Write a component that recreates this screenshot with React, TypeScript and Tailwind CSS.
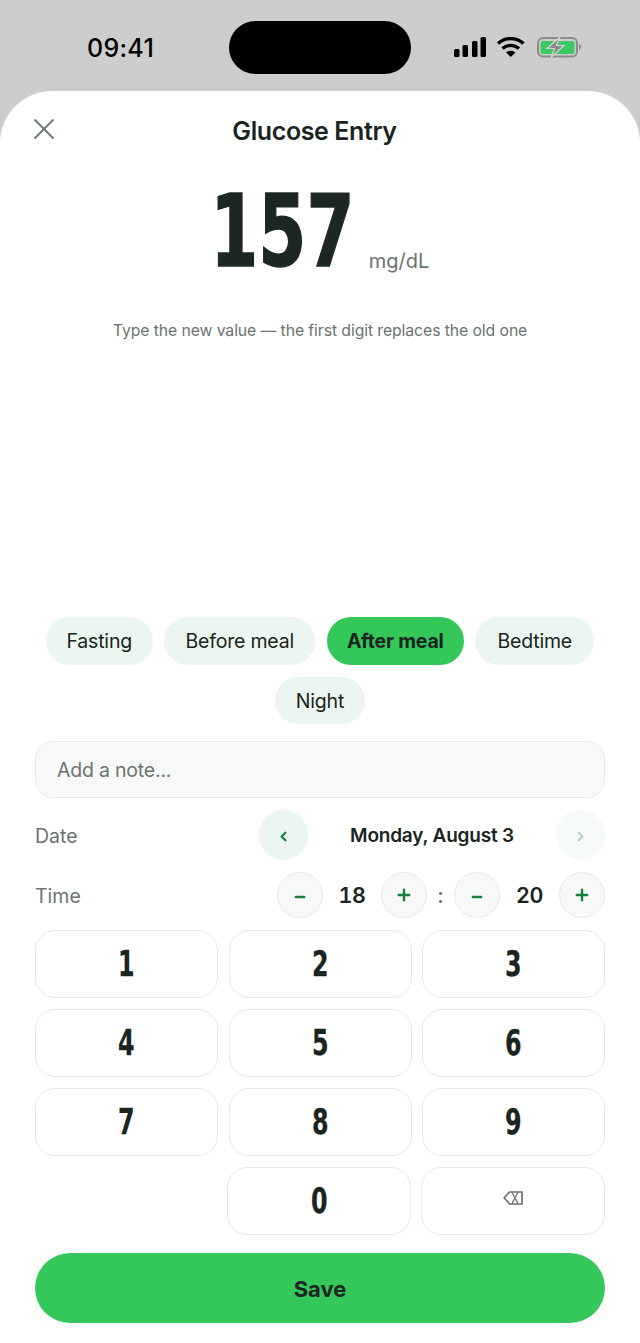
import { X, Plus, Minus, ChevronLeft, ChevronRight } from "lucide-react"

const sans = "font-['Inter','Noto_Sans',sans-serif]"
const narrow = "font-['DejaVu_Sans',sans-serif]"

const chips = [
  { label: "Fasting", width: "w-[107px]" },
  { label: "Before meal", width: "w-[151px]" },
  { label: "After meal", width: "w-[137px]" },
  { label: "Bedtime", width: "w-[119px]" },
  { label: "Night", width: "w-[90px]" },
]

function Chip({ label, width }: { label: string; width: string }) {
  const active = label === "After meal"
  return (
    <div
      className={`flex h-[47.500px] items-center justify-center rounded-full pt-[2px] text-[19.500px] tracking-[-0.2px] text-[#1a2420] ${width} ${
        active ? "bg-[#34c75a] font-bold" : "bg-[#eaf6ef] font-normal"
      }`}
    >
      {label}
    </div>
  )
}

function StepButton({ plus }: { plus?: boolean }) {
  const Icon = plus ? Plus : Minus
  return (
    <div className="flex h-[46px] w-[46px] items-center justify-center rounded-full border border-[#e6e9e7] bg-[#f6f9f7] text-[#15803d]">
      <Icon size={plus ? 18 : 14} strokeWidth={plus ? 3.2 : 4.5} className={plus ? "" : "mt-[3px]"} />
    </div>
  )
}

function Key({ children, className = "" }: { children: React.ReactNode; className?: string }) {
  return (
    <div
      className={`flex h-[68px] items-center justify-center rounded-[20px] border border-[#e6e9e7] bg-white text-[#1a2420] ${className}`}
    >
      {children}
    </div>
  )
}

function Digit({ value }: { value: string }) {
  return (
    <span className={`${narrow} inline-block scale-x-[0.68] text-[35px] font-bold leading-none [-webkit-text-stroke:0.3px_#1a2420]`}>
      {value}
    </span>
  )
}

function Backspace() {
  return (
    <svg width="20" height="14" viewBox="0 0 20 14" fill="none" stroke="#6b7370" strokeWidth="1.7" className="mb-[6px]">
      <path d="M1.200 6.800 6.500 1H19v12H6.500z" />
      <path d="M9 1.500 15 12.500M15 1.500 9 12.500" strokeWidth="1.300" />
    </svg>
  )
}

function StatusBar() {
  return (
    <div className="relative h-[91px] bg-[#cdcdcd]">
      <div className="absolute left-[87px] top-[31px] text-[25px] font-medium leading-[34px] tracking-[0.3px] text-black">
        09:41
      </div>
      <div className="absolute left-[229px] top-[21px] h-[53px] w-[182px] rounded-full bg-black" />
      <svg className="absolute left-[453px] top-[37px]" width="130" height="22" viewBox="0 0 130 22">
        <rect x="1" y="12" width="5.500" height="8" rx="1.500" fill="#000" />
        <rect x="9.500" y="8" width="5.500" height="12" rx="1.500" fill="#000" />
        <rect x="19" y="4" width="5.500" height="16" rx="1.500" fill="#000" />
        <rect x="27.500" y="0" width="5.500" height="20" rx="1.500" fill="#000" />
        <path d="M45 6.500c7.500-6.500 18-6.500 25.500 0" fill="none" stroke="#000" strokeWidth="3.400" />
        <path d="M49.500 11.500c4.800-4.200 11.700-4.200 16.500 0" fill="none" stroke="#000" strokeWidth="3.400" />
        <path d="M57.750 20 53 15.500c2.600-2.400 6.900-2.400 9.500 0z" fill="#000" />
        <rect x="85" y="1" width="39" height="18.500" rx="5" fill="none" stroke="#8b8b8b" strokeWidth="2" />
        <rect x="87.500" y="4" width="34" height="13" rx="2.500" fill="#3cc963" />
        <path d="M126 7v6c1.300-.5 2-1.500 2-3s-.7-2.500-2-3z" fill="#8b8b8b" />
        <path d="M107 0 94 11.500h7.500L98 20.500l13-12h-7.500z" fill="#8b8b8b" stroke="#d4d4d4" strokeWidth="1.200" />
      </svg>
    </div>
  )
}

export default function App() {
  return (
    <div className={`h-[1343px] w-[640px] overflow-hidden bg-[#cdcdcd] ${sans}`}>
      <StatusBar />

      <div className="flex h-[1252px] flex-col rounded-t-[52px] bg-white px-[35px]">
        {/* Header */}
        <div className="relative mt-[22px] flex h-[36px] items-center justify-center pr-[11px] pt-[2px]">
          <X size={36} strokeWidth={1.2} className="absolute left-[-9px] top-[-2px] text-[#6b7370]" />
          <div className="text-[25px] font-semibold tracking-[-0.4px] text-[#1a2420]">Glucose Entry</div>
        </div>

        {/* Value */}
        <div className="mt-[39px] flex h-[88px] items-end justify-center pl-[2px]">
          <div className="flex w-[139px] justify-center">
            <span className={`${narrow} inline-block scale-x-[0.69] text-[100px] font-bold leading-[88px] text-[#1c2723] [-webkit-text-stroke:1.500px_#1c2723]`}>
              157
            </span>
          </div>
          <div className="mb-[3px] ml-[17px] text-[20px] leading-[24px] text-[#6b7370]">mg/dL</div>
        </div>
        <div className="mt-[43px] text-center text-[15.800px] leading-[24px] tracking-[-0.1px] text-[#6b7370]">
          Type the new value — the first digit replaces the old one
        </div>

        {/* Context chips */}
        <div className="mt-[274px] flex flex-wrap justify-center gap-x-[11.500px] gap-y-[12px]">
          {chips.map((c) => (
            <Chip key={c.label} label={c.label} width={c.width} />
          ))}
        </div>

        {/* Note */}
        <div className="mt-[17px] flex h-[57px] items-center rounded-[18px] border border-[#e6e9e7] bg-[#f6f9f7] px-[21px] pt-[3px] text-[19.500px] tracking-[-0.2px] text-[#6b7370]">
          Add a note...
        </div>

        {/* Date */}
        <div className="mt-[12px] flex h-[50px] items-center justify-between">
          <div className="pt-[3px] text-[19.500px] text-[#6b7370]">Date</div>
          <div className="flex w-[346px] items-center justify-between">
            <div className="flex h-[50px] w-[49px] items-center justify-center rounded-full bg-[#eaf6ef] text-[#15803d]">
              <ChevronLeft size={15} strokeWidth={3.5} className="mt-[3px]" />
            </div>
            <div className="pt-[3px] text-[19px] font-semibold tracking-[-0.2px] text-[#1a2420]">Monday, August 3</div>
            <div className="flex h-[50px] w-[49px] items-center justify-center rounded-full bg-[#f5faf7] text-[#b5cfc0]">
              <ChevronRight size={15} strokeWidth={3.5} className="mt-[3px]" />
            </div>
          </div>
        </div>

        {/* Time */}
        <div className="mt-[12px] flex h-[46px] items-center justify-between">
          <div className="pt-[3px] text-[19.500px] text-[#6b7370]">Time</div>
          <div className="flex items-center">
            <StepButton />
            <div className="w-[58px] pt-[1px] text-center text-[21.500px] font-semibold tabular-nums tracking-[-0.4px] text-[#1a2420]">18</div>
            <StepButton plus />
            <div className="w-[27px] pt-[1px] text-center text-[21px] font-medium text-[#6b7370]">:</div>
            <StepButton />
            <div className="w-[59px] pt-[1px] text-center text-[21.500px] font-semibold tabular-nums tracking-[-0.4px] text-[#1a2420]">20</div>
            <StepButton plus />
          </div>
        </div>

        {/* Keypad */}
        <div className="mt-[12px] grid grid-cols-3 gap-x-[10.500px] gap-y-[11px]">
          {["1", "2", "3", "4", "5", "6", "7", "8", "9"].map((n) => (
            <Key key={n}>
              <Digit value={n} />
            </Key>
          ))}
        </div>
        <div className="mt-[11px] flex justify-end gap-[10px]">
          <Key className="w-[184px]">
            <Digit value="0" />
          </Key>
          <Key className="w-[184px]">
            <Backspace />
          </Key>
        </div>

        {/* Save */}
        <div className="mt-[18px] flex h-[70px] items-center justify-center rounded-full bg-[#34c75a] pt-[2px] text-[22px] font-bold text-[#1a2420]">
          Save
        </div>
      </div>
    </div>
  )
}
